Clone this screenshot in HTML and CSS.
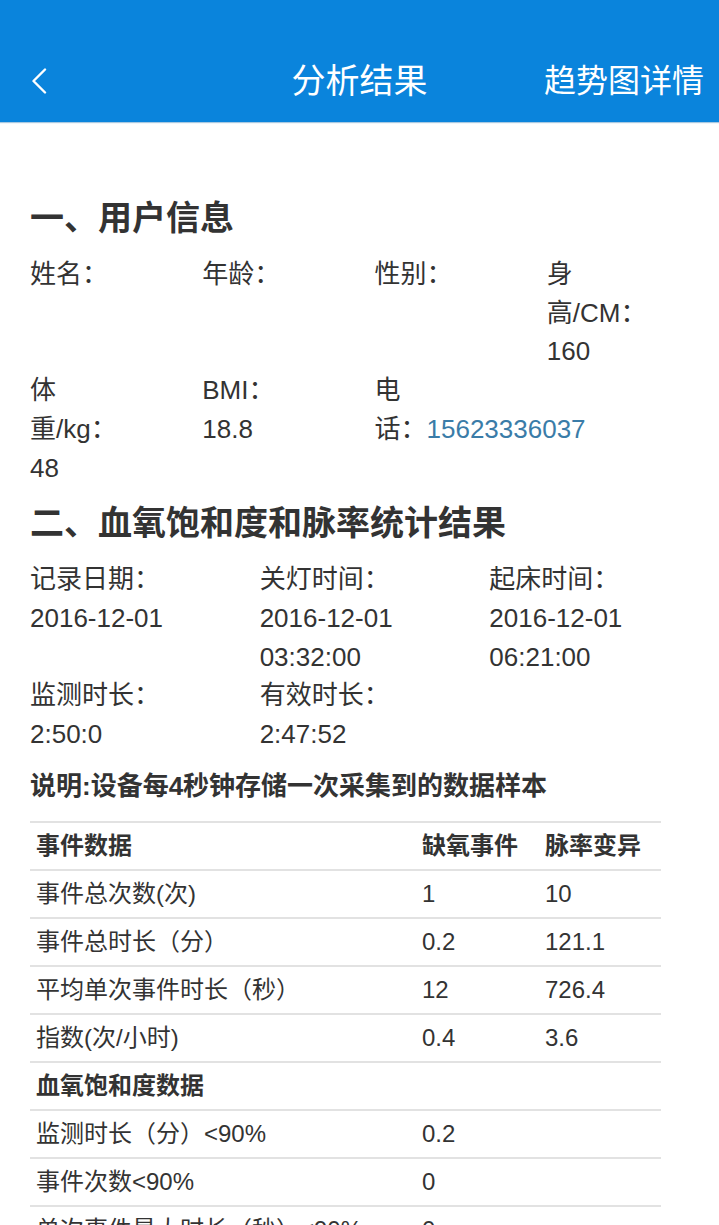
FILE: index.html
```html
<!DOCTYPE html>
<html lang="zh-CN">
<head>
<meta charset="utf-8">
<title>分析结果</title>
<link rel="stylesheet" href="styles.css">
</head>
<body>
<header class="topbar">
  <div class="back">
    <svg width="16" height="26" viewBox="0 0 16 26"><path d="M14 1.5 L2.5 13 L14 24.5" fill="none" stroke="#fff" stroke-width="2.4" stroke-linecap="round" stroke-linejoin="round"/></svg>
  </div>
  <div class="title">分析结果</div>
  <div class="action">趋势图详情</div>
</header>
<main class="content">
  <h2 class="heading">一、用户信息</h2>
  <div class="grid grid4">
    <div class="cell">姓名：</div>
    <div class="cell">年龄：</div>
    <div class="cell">性别：</div>
    <div class="cell">身<br>高/CM：<br>160</div>
    <div class="cell">体<br>重/kg：<br>48</div>
    <div class="cell">BMI：<br>18.8</div>
    <div class="cell">电<br><span class="nowrap">话：<span class="link">15623336037</span></span></div>
    <div class="cell"></div>
  </div>
  <h2 class="heading">二、血氧饱和度和脉率统计结果</h2>
  <div class="grid grid3">
    <div class="cell">记录日期：<br>2016-12-01</div>
    <div class="cell">关灯时间：<br>2016-12-01<br>03:32:00</div>
    <div class="cell">起床时间：<br>2016-12-01<br>06:21:00</div>
    <div class="cell">监测时长：<br>2:50:0</div>
    <div class="cell">有效时长：<br>2:47:52</div>
    <div class="cell"></div>
  </div>
  <p class="note">说明:设备每4秒钟存储一次采集到的数据样本</p>
  <table class="data">
    <colgroup><col class="c1"><col class="c2"><col class="c3"></colgroup>
    <tr class="bold"><td>事件数据</td><td>缺氧事件</td><td>脉率变异</td></tr>
    <tr><td>事件总次数(次)</td><td>1</td><td>10</td></tr>
    <tr><td>事件总时长（分）</td><td>0.2</td><td>121.1</td></tr>
    <tr><td>平均单次事件时长（秒）</td><td>12</td><td>726.4</td></tr>
    <tr><td>指数(次/小时)</td><td>0.4</td><td>3.6</td></tr>
    <tr class="bold"><td>血氧饱和度数据</td><td></td><td></td></tr>
    <tr><td>监测时长（分）&lt;90%</td><td>0.2</td><td></td></tr>
    <tr><td>事件次数&lt;90%</td><td>0</td><td></td></tr>
    <tr><td>单次事件最大时长（秒）&lt;90%</td><td>0</td><td></td></tr>
  </table>
</main>
</body>
</html>
```
FILE: styles.css
```css
html, body {
  margin: 0;
  padding: 0;
  background: #fff;
}
body {
  font-family: "Liberation Sans", "Noto Sans CJK SC", sans-serif;
  color: #333;
  width: 719px;
  height: 1225px;
  overflow: hidden;
}
.topbar {
  height: 82px;
  padding-top: 40px;
  background: #0a84dc;
  color: #fff;
  display: grid;
  grid-template-columns: 1fr auto 1fr;
  align-items: center;
  box-shadow: 0 1px 1px rgba(10, 100, 170, 0.35);
}
.back {
  padding-left: 31px;
  display: flex;
  align-items: center;
}
.back svg {
  display: block;
}
.title {
  font-size: 34px;
  line-height: 44px;
}
.action {
  justify-self: end;
  padding-right: 15px;
  font-size: 32px;
  line-height: 44px;
}
.content {
  padding: 74px 0 0 30px;
}
.heading {
  margin: 0;
  font-size: 34px;
  line-height: 44px;
  font-weight: bold;
  color: #333;
}
.grid {
  display: grid;
  margin: 15px 0 14px;
  font-size: 26px;
  line-height: 38.7px;
}
.grid4 {
  grid-template-columns: repeat(4, minmax(0, 1fr));
}
.grid3 {
  grid-template-columns: repeat(3, minmax(0, 1fr));
  margin-bottom: 12px;
}
.nowrap {
  white-space: nowrap;
}
.link {
  color: #3a7ca8;
}
.note {
  margin: 0 0 15px;
  font-size: 26px;
  line-height: 40px;
  font-weight: bold;
}
.data {
  width: 631px;
  border-collapse: collapse;
  font-size: 24px;
}
.data .c1 { width: 386px; }
.data .c2 { width: 123px; }
.data .c3 { width: 122px; }
.data td {
  height: 46px;
  padding: 0 0 0 6px;
  border-top: 2px solid #e2e2e2;
  line-height: 46px;
  white-space: nowrap;
  vertical-align: middle;
}
.data .bold td {
  font-weight: bold;
}
```
